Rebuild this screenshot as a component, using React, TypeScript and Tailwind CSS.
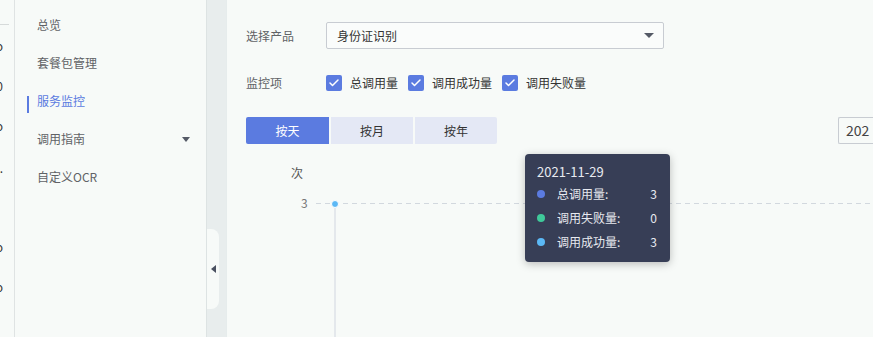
import { Check } from 'lucide-react';

const font = { fontFamily: '"Noto Sans CJK SC", "Noto Sans", sans-serif' };

const menu = [
  { label: '总览' },
  { label: '套餐包管理' },
  { label: '服务监控', active: true },
  { label: '调用指南', caret: true },
  { label: '自定义OCR' },
];

const checks = ['总调用量', '调用成功量', '调用失败量'];

const tipRows = [
  { dot: 'bg-[#5b7be0]', label: '总调用量:', value: 3 },
  { dot: 'bg-[#3fc99a]', label: '调用失败量:', value: 0 },
  { dot: 'bg-[#5bb8f5]', label: '调用成功量:', value: 3 },
];

export default function App() {
  return (
    <div
      className="flex w-[873px] h-[337px] overflow-hidden bg-[#f7faf8] text-[12px] text-[#5f6368]"
      style={font}
    >
      {/* 左侧一级导航（被遮住，只露出边缘） */}
      <div className="w-[15px] shrink-0 border-r border-[#dfe3e3] flex flex-col overflow-hidden">
        <div className="mt-[24px] w-[9px] border-t border-[#d6dada]" />
        {['Info', '100', 'Demo', 'a.', 'Logo', 'Pro'].map((t, i) => (
          <div
            key={i}
            className={`flex justify-end pr-[11px] h-[20px] items-center text-[12px] text-[#333] ${
              i === 0 ? 'mt-[11px]' : i === 4 ? 'mt-[59px]' : i === 3 ? 'mt-[22px]' : 'mt-[20px]'
            }`}
          >
            <span className="whitespace-nowrap">{t}</span>
          </div>
        ))}
      </div>

      {/* 二级菜单 */}
      <div className="w-[191px] shrink-0 pt-[10px] relative">
        {menu.map((m) => (
          <div key={m.label} className="relative h-[38px] flex items-center pl-[22px] pr-[14px]">
            {m.active && <div className="absolute left-[12px] top-[10px] w-[2px] h-[17px] bg-[#5b7be0]" />}
            <span className={`flex-1 leading-none -mt-[8px] ${m.active ? 'text-[#5b7be0]' : 'text-[#606266]'}`}>
              {m.label}
            </span>
            {m.caret && (
              <span className="-mt-[8px] mr-[2px] w-0 h-0 border-l-[4px] border-r-[4px] border-t-[5px] border-l-transparent border-r-transparent border-t-[#555a66]" />
            )}
          </div>
        ))}
      </div>

      {/* 间隔栏 + 折叠按钮 */}
      <div className="w-[20px] shrink-0 bg-[#e8eded] border-l border-[#dde3e3] relative">
        <div className="absolute left-0 top-[229px] w-[12px] h-[80px] bg-[#f7faf8] rounded-r-[8px] flex items-center justify-center">
          <span className="w-0 h-0 border-t-[4px] border-b-[4px] border-r-[5px] border-t-transparent border-b-transparent border-r-[#4a5060]" />
        </div>
      </div>

      {/* 主内容 */}
      <div className="flex-1 border-l border-[#e6ecec] pl-[19px] flex flex-col min-w-0">
        <div className="mt-[22px] h-[27px] flex items-center">
          <span className="w-[80px] text-[#606266]">选择产品</span>
          <div className="w-[338px] h-[27px] border border-[#c8ccd2] rounded-[2px] bg-white/40 flex items-center pl-[10px] pr-[9px]">
            <span className="flex-1 text-[#333]">身份证识别</span>
            <span className="w-0 h-0 border-l-[5px] border-r-[5px] border-t-[5px] border-l-transparent border-r-transparent border-t-[#555a66]" />
          </div>
        </div>

        <div className="mt-[22px] h-[24px] flex items-center">
          <span className="w-[80px] text-[#606266]">监控项</span>
          {checks.map((c) => (
            <div key={c} className="flex items-center mr-[10px]">
              <span className="w-[16px] h-[16px] rounded-[2px] bg-[#5b7be0] flex items-center justify-center">
                <Check size={12} strokeWidth={3} color="white" />
              </span>
              <span className="ml-[8px] text-[#333]">{c}</span>
            </div>
          ))}
        </div>

        <div className="mt-[22px] h-[27px] flex items-center">
          <div className="flex gap-[2px]">
            <div className="w-[83px] h-[27px] rounded-l-[2px] bg-[#5b7be0] text-white flex items-center justify-center">按天</div>
            <div className="w-[82px] h-[27px] bg-[#e4e8f5] text-[#333] flex items-center justify-center">按月</div>
            <div className="w-[82px] h-[27px] rounded-r-[2px] bg-[#e4e8f5] text-[#333] flex items-center justify-center">按年</div>
          </div>
          <div className="ml-auto w-[35px] h-[27px] border border-[#c8ccd2] border-r-0 rounded-l-[2px] pl-[7px] flex items-center text-[14px] text-[#444] whitespace-nowrap">
            <span className="w-[26px] overflow-hidden">202</span>
          </div>
        </div>

        {/* 图表 */}
        <div className="relative flex-1">
          <span className="absolute left-[45px] top-[20px] text-[#555]">次</span>
          <span className="absolute left-[55px] top-[50px] text-[#777]">3</span>
          <div className="absolute left-[70px] right-0 top-[59px] h-[1px] bg-[repeating-linear-gradient(90deg,#d2d8de_0_5px,transparent_5px_9px)]" />
          <div className="absolute left-[88px] top-[62px] bottom-0 w-[2px] bg-[#e4e8ec]" />
          <div className="absolute left-[85px] top-[56px] w-[8px] h-[8px] rounded-full bg-[#5bb8f5] border border-white" />

          {/* 提示框 */}
          <div className="absolute left-[279px] top-[10px] w-[145px] h-[108px] rounded-[4px] bg-[#373e56] shadow-[0_2px_8px_rgba(0,0,0,0.25)] text-[#e8eaf0] px-[12px] pt-[8px]">
            <div className="text-[13px] leading-[20px]">2021-11-29</div>
            {tipRows.map((r) => (
              <div key={r.label} className="flex items-center h-[24px]">
                <span className={`w-[8px] h-[8px] rounded-full ${r.dot}`} />
                <span className="ml-[12px] flex-1">{r.label}</span>
                <span className="mr-[1px]">{r.value}</span>
              </div>
            ))}
          </div>
        </div>
      </div>
    </div>
  );
}
